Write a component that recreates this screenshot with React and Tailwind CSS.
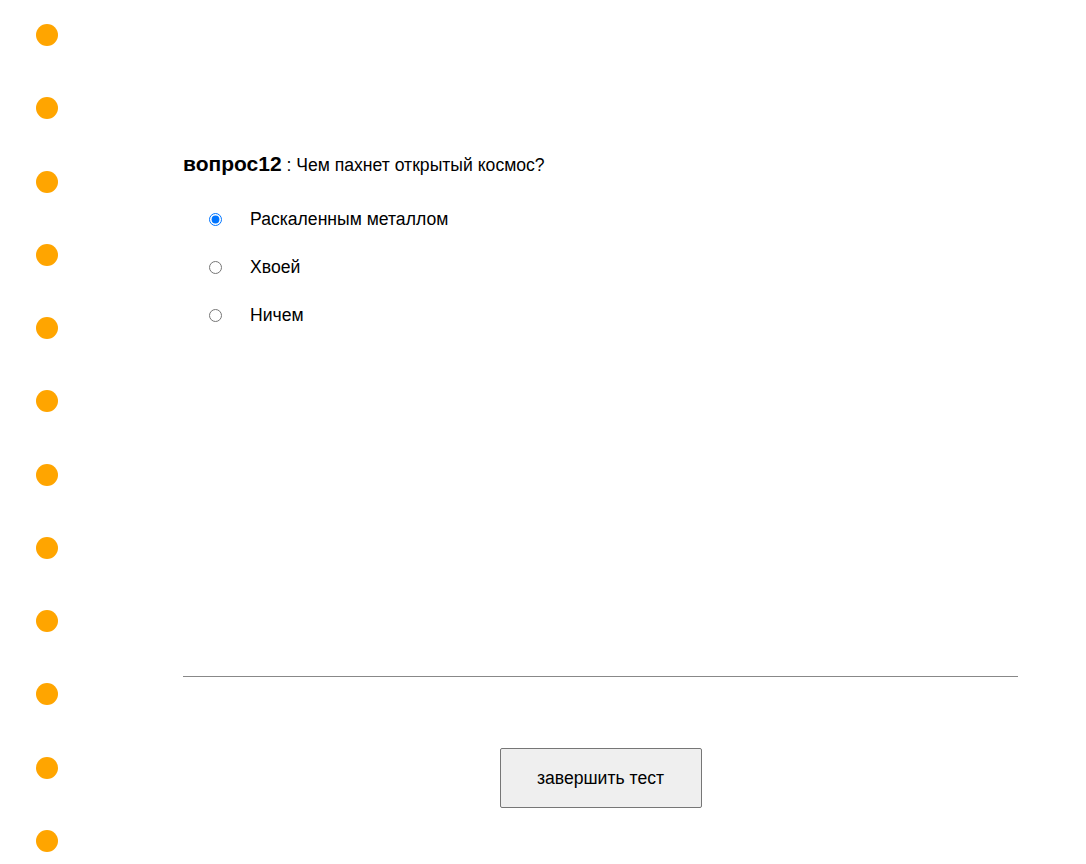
import { useState } from "react";

const DOTS = Array.from({ length: 12 }, (_, i) => i);

const OPTIONS = ["Раскаленным металлом", "Хвоей", "Ничем"];

export default function App() {
    const [answer, setAnswer] = useState(0);

    return (
        <div className="flex bg-white min-h-[864px] font-['Liberation_Sans',Arial,sans-serif] text-black">

            {/* question dots */}
            <div className="w-[183px] shrink-0 flex flex-col pt-[24px]">
                {DOTS.map(i => (
                    <div key={i} className="h-[73.27px] pl-[36px]">
                        <div className="w-[22px] h-[22px] rounded-full bg-[#ffa500]" />
                    </div>
                ))}
            </div>

            {/* question */}
            <div className="w-[835px] flex flex-col">

                <p className="mt-[152px] text-[17.6px] leading-[24px]">
                    <span className="font-bold text-[21px]">вопрос12</span> : Чем пахнет открытый космос?
                </p>

                <div className="mt-[33px] flex flex-col gap-[29px]">
                    {OPTIONS.map((opt, i) => (
                        <label key={opt} className="flex items-center h-[19px] pl-[26px] text-[17.6px]">
                            <input
                                type="radio"
                                name="q12"
                                checked={answer === i}
                                onChange={() => setAnswer(i)}
                                className="w-[13px] h-[13px] m-0 accent-[#0075ff]"
                            />
                            <span className="ml-[28px]">{opt}</span>
                        </label>
                    ))}
                </div>

                <div className="mt-[351px] h-px bg-[#888888]" />

                <div className="flex justify-center mt-[71px]">
                    <button className="w-[202px] h-[60px] bg-[#efefef] border border-[#767676] rounded-[2px] text-[17.6px]">
                        завершить тест
                    </button>
                </div>

            </div>

        </div>
    );
}
